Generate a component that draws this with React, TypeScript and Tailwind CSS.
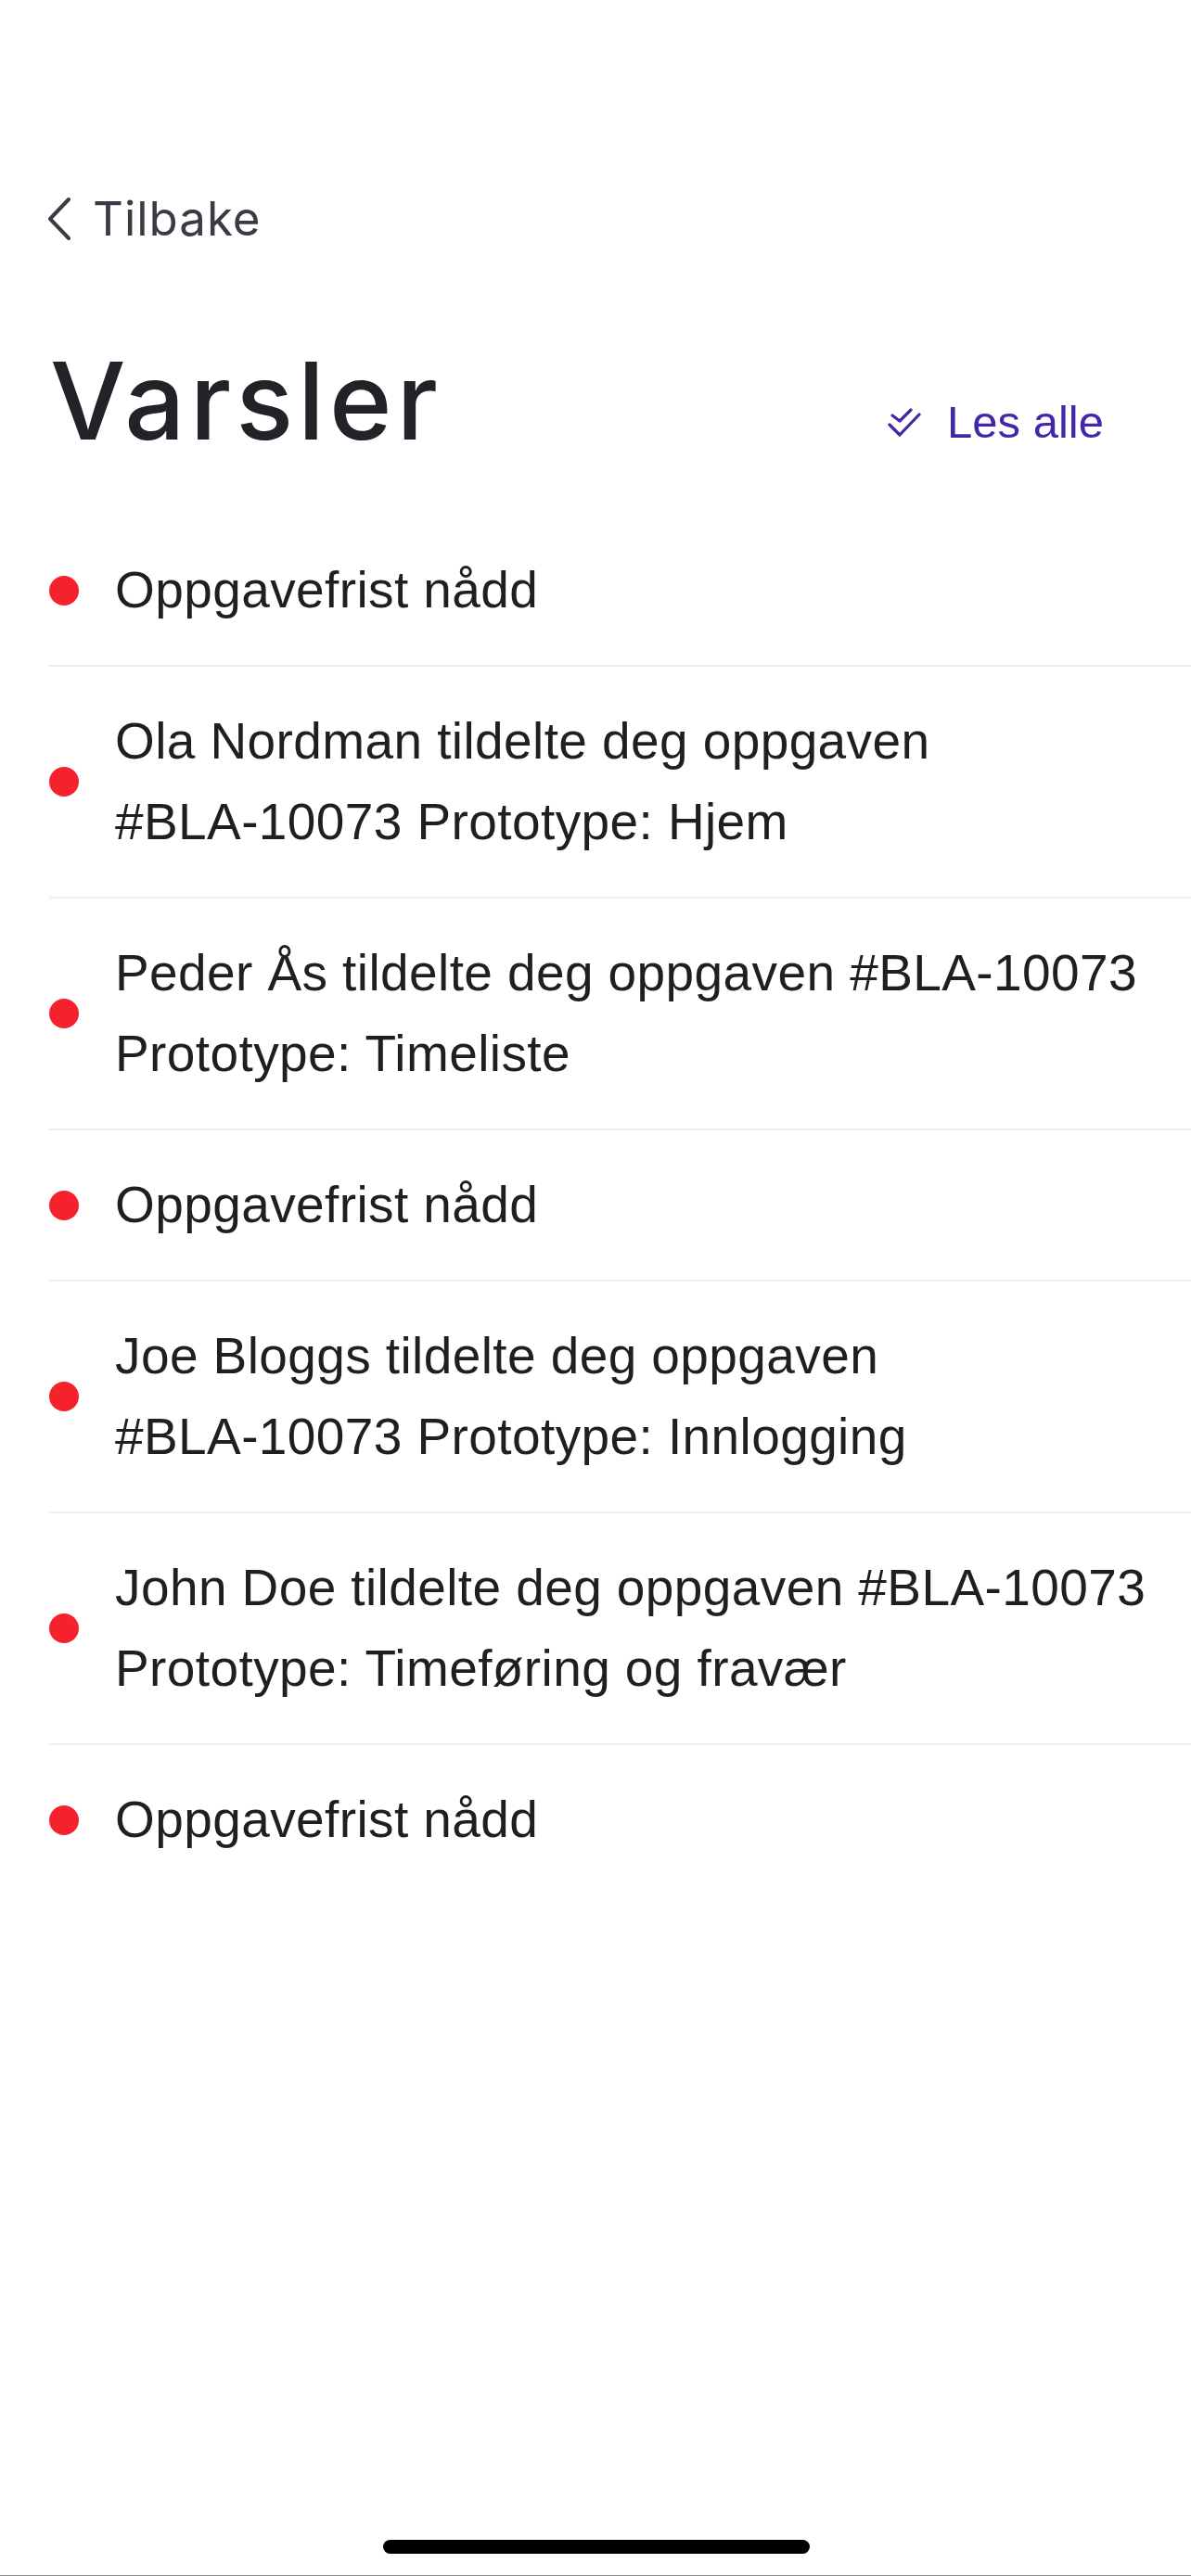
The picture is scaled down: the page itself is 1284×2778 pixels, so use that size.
const NOTIFICATIONS = [
  { text: "Oppgavefrist nådd" },
  { text: "Ola Nordman tildelte deg oppgaven", task: "Prototype: Hjem" },
  { text: "Peder Ås tildelte deg oppgaven", task: "Prototype: Timeliste" },
  { text: "Oppgavefrist nådd" },
  { text: "Joe Bloggs tildelte deg oppgaven", task: "Prototype: Innlogging" },
  { text: "John Doe tildelte deg oppgaven", task: "Prototype: Timeføring og fravær" },
  { text: "Oppgavefrist nådd" },
];

const BackIcon = () => (
  <svg width="32" height="48" viewBox="0 0 32 48" fill="none" stroke="#3b3a45" strokeWidth="4" strokeLinecap="round" strokeLinejoin="round">
    <path d="M26 3 L6 24 L26 45" />
  </svg>
);

const ReadAllIcon = () => (
  <svg width="36" height="36" viewBox="0 0 36 36" fill="none" stroke="#4426a8" strokeWidth="3.2" strokeLinecap="round" strokeLinejoin="round">
    <path d="M5 10 L13 16 L25 4" />
    <path d="M2 20 L13 31 L34 9" />
  </svg>
);

const App = () => {
  return (
    <div className="min-h-[2778px] w-[1284px] bg-white flex flex-col relative" style={{ fontFamily: "'Liberation Sans', Arial, sans-serif" }}>
      {/* tilbake */}
      <div className="pt-[200px] pl-[48px] flex items-center gap-[20px] text-[#3b3a45]">
        <BackIcon />
        <span className="text-[51px] leading-[72px] tracking-[1px] font-['Inter',sans-serif]">Tilbake</span>
      </div>

      {/* header */}
      <div className="mt-[96px] pl-[54px] pr-[94px] flex items-baseline justify-between">
        <h1 className="text-[115px] leading-[130px] font-medium tracking-[5px] text-[#222228] font-['Inter',sans-serif]">Varsler</h1>
        <button className="flex items-center gap-[28px] text-[49px] text-[#4426a8]">
          <ReadAllIcon />
          <span>Les alle</span>
        </button>
      </div>

      {/* liste */}
      <ul className="mt-[58px] pl-[53px]">
        {NOTIFICATIONS.map((n, i) => (
          <li
            key={i}
            className={`flex items-center gap-[39px] py-[37px] pr-[28px] ${i < NOTIFICATIONS.length - 1 ? "border-b-2 border-[#efefef]" : ""}`}
          >
            <span className="w-[32px] h-[32px] rounded-full bg-[#f5222d] shrink-0" />
            <p className="text-[55px] leading-[87px] tracking-[0.4px] text-[#1f1f1f]">
              {n.text}
              {n.task && (
                <>
                  {" "}
                  <span className="whitespace-nowrap">#BLA-10073</span> {n.task}
                </>
              )}
            </p>
          </li>
        ))}
      </ul>

      {/* home indicator */}
      <div className="absolute bottom-[24px] left-[413px] w-[460px] h-[15px] rounded-full bg-black" />
      <div className="absolute bottom-0 left-0 right-0 h-px bg-[#888]" />
    </div>
  );
};

export default App;
